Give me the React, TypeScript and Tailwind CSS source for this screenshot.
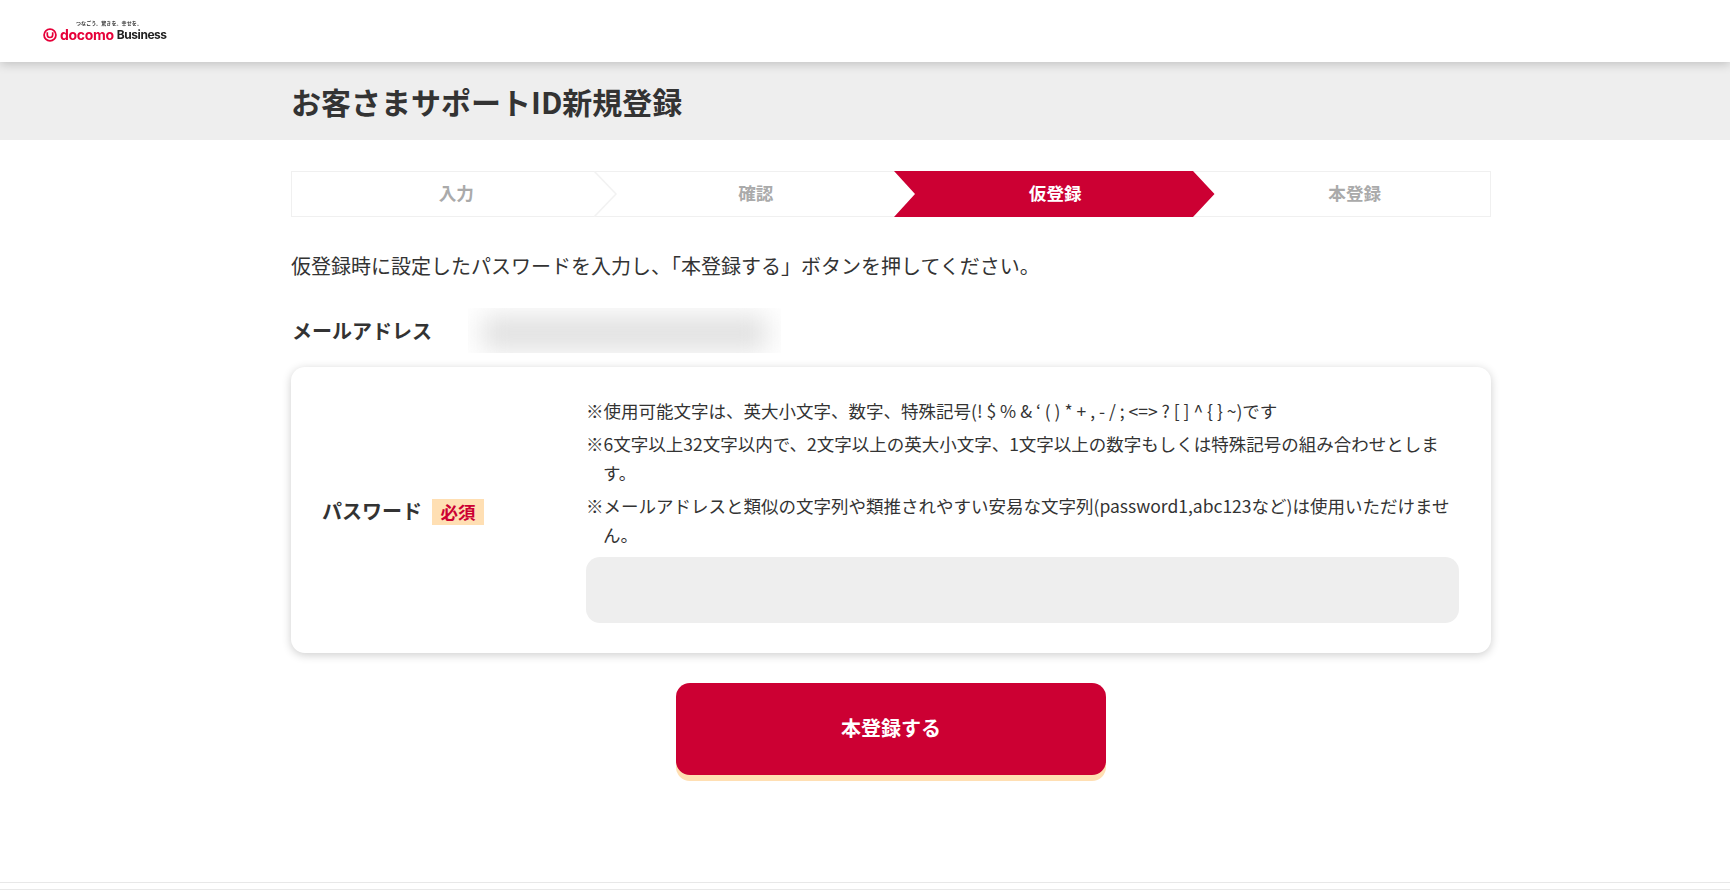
const FONT = '[font-family:"Noto_Sans_CJK_JP","Noto_Sans",sans-serif]'

const NOTES = [
  '※使用可能文字は、英大小文字、数字、特殊記号(! $ % & ‘ ( ) * + , - / ; <=> ? [ ] ^ { } ~)です',
  '※6文字以上32文字以内で、2文字以上の英大小文字、1文字以上の数字もしくは特殊記号の組み合わせとします。',
  '※メールアドレスと類似の文字列や類推されやすい安易な文字列(password1,abc123など)は使用いただけません。',
]

const STEPS = ['入力', '確認', '仮登録', '本登録']

function Logo() {
  return (
    <div className="flex w-[126px] flex-col blur-[0.3px]">
      <span className="mb-[2px] ml-[33px] text-[5px] leading-[7px] font-bold tracking-[0.1px] text-[#333]">つなごう。驚きを。幸せを。</span>
      <div className="flex items-center">
        <svg width="14" height="14" viewBox="0 0 14 14" fill="none" className="shrink-0">
          <circle cx="7" cy="7" r="5.9" stroke="#e60039" strokeWidth="1.8" />
          <path d="M4.3 4.2v2.6a2.7 2.7 0 0 0 5.4 0V4.2" stroke="#e60039" strokeWidth="1.7" />
        </svg>
        <span className="ml-[3px] font-['Inter',sans-serif] text-[14px] leading-[14px] font-bold tracking-[-0.3px] text-[#e60039]">docomo</span>
        <span className="ml-[3px] font-['Inter',sans-serif] text-[12px] leading-[14px] font-bold tracking-[-0.45px] text-[#222]">Business</span>
      </div>
    </div>
  )
}

function Stepper() {
  return (
    <div className="flex h-[46px] w-[1200px] border border-[#f0f0f0]">
      {STEPS.map((step, i) => {
        const active = i === 2
        return (
          <div key={step} className="relative flex h-full flex-1 items-center justify-center pb-[1px] pl-[29px]">
            {active && (
              <div className="absolute top-[-1px] bottom-[-1px] left-[3px] right-[-24px] bg-[#cc0033] [clip-path:polygon(0_0,299px_0,100%_50%,299px_100%,0_100%,21px_50%)]" />
            )}
            {i === 0 && (
              <svg width="26" height="46" viewBox="0 0 26 46" fill="none" className="absolute top-[-1px] right-[-26px]">
                <path d="M2 0 L24 23 L2 46" stroke="#f2f2f2" strokeWidth="1.5" />
              </svg>
            )}
            <span className={`relative text-[17.6px] font-bold ${active ? 'text-white' : 'text-[#aaaaaa]'}`}>{step}</span>
          </div>
        )
      })}
    </div>
  )
}

export default function App() {
  return (
    <div className={`flex h-[890px] flex-col overflow-hidden bg-white text-[#333333] ${FONT}`}>
      <header className="relative z-10 flex h-[62px] shrink-0 items-center bg-white pb-[1px] pl-[43px] shadow-[0_2px_10px_rgba(0,0,0,0.2)]">
        <Logo />
      </header>

      <div className="flex h-[78px] shrink-0 items-center bg-[#eeeeee] pl-[291px]">
        <h1 className="w-[1200px] text-[30px] leading-none font-bold">お客さまサポートID新規登録</h1>
      </div>

      <main className="ml-[291px] flex w-[1200px] flex-1 flex-col pt-[31px]">
        <Stepper />

        <p className="mt-[36px] text-[20px] leading-[26px]">
          仮登録時に設定したパスワードを入力し、「本登録する」ボタンを押してください。
        </p>

        <div className="mt-[29px] flex h-[45px] items-center">
          <span className="ml-[1px] w-[176px] text-[20px] font-bold">メールアドレス</span>
          <div className="h-[45px] w-[313px] overflow-hidden bg-white">
            <div className="mx-[14px] mt-[8px] h-[34px] bg-[#e0e0e0] blur-[13px]" />
          </div>
        </div>

        <section className="mt-[14px] flex h-[286px] rounded-[14px] bg-white shadow-[0_2px_10px_rgba(0,0,0,0.2)]">
          <div className="flex w-[295px] shrink-0 items-center pt-[2px] pl-[31px]">
            <span className="text-[20px] font-bold">パスワード</span>
            <span className="mt-[2px] ml-[10px] bg-[#ffdfb3] px-[8.5px] text-[17.5px] leading-[26px] font-bold text-[#cc0033]">必須</span>
          </div>
          <div className="flex flex-1 flex-col pt-[29px] pr-[32px]">
            {NOTES.map((note) => (
              <p key={note} className="mb-[4px] pl-[17px] -indent-[17px] text-[17.5px] leading-[29px]">{note}</p>
            ))}
            <div className="mt-[4px] h-[66px] rounded-[14px] bg-[#eeeeee]" />
          </div>
        </section>

        <button
          type="button"
          className="mx-auto mt-[30px] h-[92px] w-[430px] rounded-[14px] bg-[#cc0033] pb-[2px] text-[20px] font-bold text-white shadow-[0_6px_0_#ffdfb3]"
        >
          本登録する
        </button>
      </main>

      <footer className="h-[8px] shrink-0 border-y border-[#e8e8e8]" />
    </div>
  )
}
